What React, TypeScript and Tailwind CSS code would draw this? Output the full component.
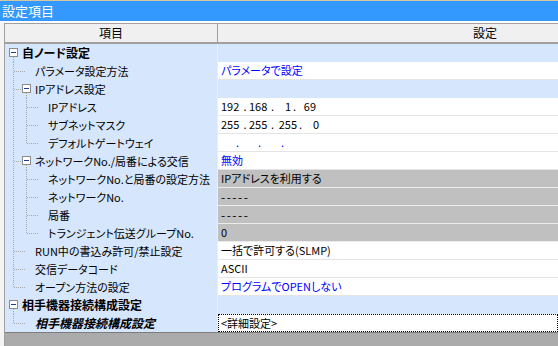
import React from 'react'

type Line = 'none' | 'full' | 'top' | 'bottom'

type Row = {
  level: 0 | 1 | 2
  box?: boolean
  v0: Line
  v1: Line
  label: string
  bold?: boolean
  italic?: boolean
  value?: React.ReactNode
  tone: 'cat' | 'white' | 'grey'
  blue?: boolean
  focus?: boolean
}

// [text, width, align] pieces of an address field
type Piece = [string, number, 'l' | 'c' | 'r']

function Addr({ parts }: { parts: Piece[] }) {
  return (
    <span className="flex">
      {parts.map(([t, w, a], i) => (
        <span
          key={i}
          style={{ width: w }}
          className={`shrink-0 whitespace-pre ${a === 'l' ? 'text-left' : a === 'c' ? 'text-center' : 'text-right'}`}
        >
          {t}
        </span>
      ))}
    </span>
  )
}

const ipParts: Piece[] = [['192', 20, 'l'], ['.', 8, 'c'], ['168', 20, 'l'], ['.', 7, 'c'], ['1', 15, 'r'], ['.', 7, 'c'], ['69', 18, 'r']]
const maskParts: Piece[] = [['255', 20, 'l'], ['.', 8, 'c'], ['255', 20, 'l'], ['.', 7, 'c'], ['255', 21, 'r'], ['.', 7, 'c'], ['0', 15, 'r']]
const gwParts: Piece[] = [['', 14, 'l'], ['.', 5, 'c'], ['', 17, 'l'], ['.', 5, 'c'], ['', 18, 'l'], ['.', 5, 'c']]

const dashes = <span className="text-[12px] tracking-[1.5px]">-----</span>

const rows: Row[] = [
  { level: 0, box: true, v0: 'bottom', v1: 'none', label: '自ノード設定', bold: true, tone: 'cat' },
  { level: 1, v0: 'full', v1: 'none', label: 'パラメータ設定方法', value: 'パラメータで設定', tone: 'white', blue: true },
  { level: 1, box: true, v0: 'full', v1: 'bottom', label: 'IPアドレス設定', tone: 'cat' },
  { level: 2, v0: 'full', v1: 'full', label: 'IPアドレス', value: <Addr parts={ipParts} />, tone: 'white' },
  { level: 2, v0: 'full', v1: 'full', label: 'サブネットマスク', value: <Addr parts={maskParts} />, tone: 'white' },
  { level: 2, v0: 'full', v1: 'top', label: 'デフォルトゲートウェイ', value: <Addr parts={gwParts} />, tone: 'white', blue: true },
  { level: 1, box: true, v0: 'full', v1: 'bottom', label: 'ネットワークNo./局番による交信', value: '無効', tone: 'white', blue: true },
  { level: 2, v0: 'full', v1: 'full', label: 'ネットワークNo.と局番の設定方法', value: 'IPアドレスを利用する', tone: 'grey' },
  { level: 2, v0: 'full', v1: 'full', label: 'ネットワークNo.', value: dashes, tone: 'grey' },
  { level: 2, v0: 'full', v1: 'full', label: '局番', value: dashes, tone: 'grey' },
  { level: 2, v0: 'full', v1: 'top', label: 'トランジェント伝送グループNo.', value: '0', tone: 'grey' },
  { level: 1, v0: 'full', v1: 'none', label: 'RUN中の書込み許可/禁止設定', value: '一括で許可する(SLMP)', tone: 'white' },
  { level: 1, v0: 'full', v1: 'none', label: '交信データコード', value: 'ASCII', tone: 'white' },
  { level: 1, v0: 'top', v1: 'none', label: 'オープン方法の設定', value: 'プログラムでOPENしない', tone: 'white', blue: true },
  { level: 0, box: true, v0: 'bottom', v1: 'none', label: '相手機器接続構成設定', bold: true, tone: 'cat' },
  { level: 1, v0: 'top', v1: 'none', label: '相手機器接続構成設定', bold: true, italic: true, value: '<詳細設定>', tone: 'white', focus: true },
]

const offsets = [17, 30, 43]

function VLine({ x, kind }: { x: number; kind: Line }) {
  if (kind === 'none') return null
  const y1 = kind === 'bottom' ? 13 : 0
  const y2 = kind === 'top' ? 9 : 18
  return <line x1={x + 0.5} x2={x + 0.5} y1={y1} y2={y2} stroke="#a8a8a8" strokeDasharray="1 1" />
}

function Tree({ row }: { row: Row }) {
  const w = offsets[row.level]
  const lv = row.level
  return (
    <svg width={w} height={18} className="shrink-0" shapeRendering="crispEdges">
      <VLine x={8} kind={row.v0} />
      {lv === 2 && <VLine x={21} kind={row.v1} />}
      {lv === 1 && row.box && <VLine x={21} kind={row.v1} />}
      {lv === 1 && !row.box && <line x1={9} x2={20} y1={9.5} y2={9.5} stroke="#a8a8a8" strokeDasharray="1 1" />}
      {lv === 1 && row.box && <line x1={9} x2={17} y1={9.5} y2={9.5} stroke="#a8a8a8" strokeDasharray="1 1" />}
      {lv === 2 && <line x1={22} x2={33} y1={9.5} y2={9.5} stroke="#a8a8a8" strokeDasharray="1 1" />}
      {row.box && (
        <g>
          <rect x={(lv === 0 ? 4 : 17) + 0.5} y={4.5} width={8} height={8} fill="#fff" stroke="#8c8c8c" />
          <line x1={lv === 0 ? 6 : 19} x2={lv === 0 ? 11 : 24} y1={8.5} y2={8.5} stroke="#1f3f8f" />
        </g>
      )}
    </svg>
  )
}

const toneClass = {
  cat: 'bg-[#d6e6fd] border-[#d6e6fd]',
  white: 'bg-white border-[#e4e4e4]',
  grey: 'bg-[#c0c0c0] border-[#ececec]',
}

export default function App() {
  return (
    <div className="w-[558px] h-[346px] overflow-hidden bg-[#f4f4f4] flex flex-col text-[11px] text-black [font-family:'Noto_Sans_CJK_JP',sans-serif] [font-feature-settings:'palt']">
      <div className="h-[21px] shrink-0 border-t border-[#d6c6a4] bg-[#3399ff] text-white text-[13px] leading-[20px] pl-[2px]">
        設定項目
      </div>
      <div className="h-[2px] shrink-0 bg-white" />
      <div className="flex-1 min-h-0 flex flex-col ml-[4px] border-l border-t border-[#a0a0a0] overflow-hidden">
        <div className="flex h-[20px] shrink-0 bg-[#f0f0f0] border-b-2 border-[#a0a0a0] leading-[18px] text-[12px]">
          <div className="w-[212px] shrink-0 text-center">項目</div>
          <div className="w-px shrink-0 bg-[#a0a0a0]" />
          <div className="w-[534px] shrink-0 text-center">設定</div>
        </div>
        {rows.map((row, i) => (
          <div key={i} className="flex h-[18px] shrink-0 leading-[18px]">
            <div className="w-[212px] shrink-0 flex bg-[#d6e6fd] whitespace-nowrap">
              <Tree row={row} />
              <span className={`${row.bold ? 'font-bold text-[12px]' : ''} ${row.italic ? 'italic' : ''}`}>{row.label}</span>
            </div>
            <div className="w-px shrink-0 bg-[#e6effc]" />
            {row.focus ? (
              <div className="flex-1 border border-dotted border-black bg-white pl-[2px] leading-[16px]">
                {row.value}
              </div>
            ) : (
              <div
                className={`flex-1 flex border-b pl-[3px] leading-[17px] whitespace-pre ${toneClass[row.tone]} ${row.blue ? 'text-[#0000ff]' : ''}`}
              >
                {row.value}
              </div>
            )}
          </div>
        ))}
        <div className="flex-1 bg-[#ababab] border-t border-[#7c7c7c]" />
      </div>
    </div>
  )
}
